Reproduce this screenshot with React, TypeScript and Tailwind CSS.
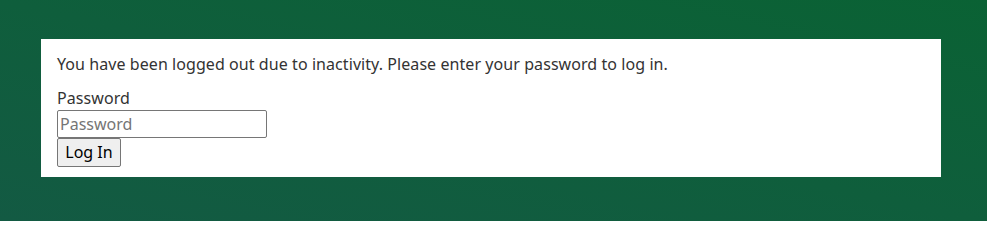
import React from "react";

export default function App() {
  return (
    <div className="h-[221px] w-full overflow-hidden bg-linear-to-tr from-[#135a43] to-[#0a6234] pt-[39px] pl-[41px]">
      <div className="w-[900px] h-[138px] bg-white pt-[16px] pl-[16px] text-[#333333] text-[16px] tracking-[0.07px] font-['Noto_Sans',sans-serif]">
        <p className="leading-[19px] mb-[15px]">
          You have been logged out due to inactivity. Please enter your password to log in.
        </p>
        <label className="block leading-[19px] mb-[2px]">Password</label>
        <input
          type="password"
          placeholder="Password"
          className="block box-border w-[210px] h-[28px] border border-[#767676] rounded-[2px] px-[2px] text-[16px] tracking-normal placeholder:text-[#757575] outline-none"
        />
        <button className="block box-border h-[29px] w-[64px] bg-[#efefef] border border-[#767676] rounded-[2px] text-black text-[16px] tracking-normal leading-[19px]">
          Log In
        </button>
      </div>
    </div>
  );
}
